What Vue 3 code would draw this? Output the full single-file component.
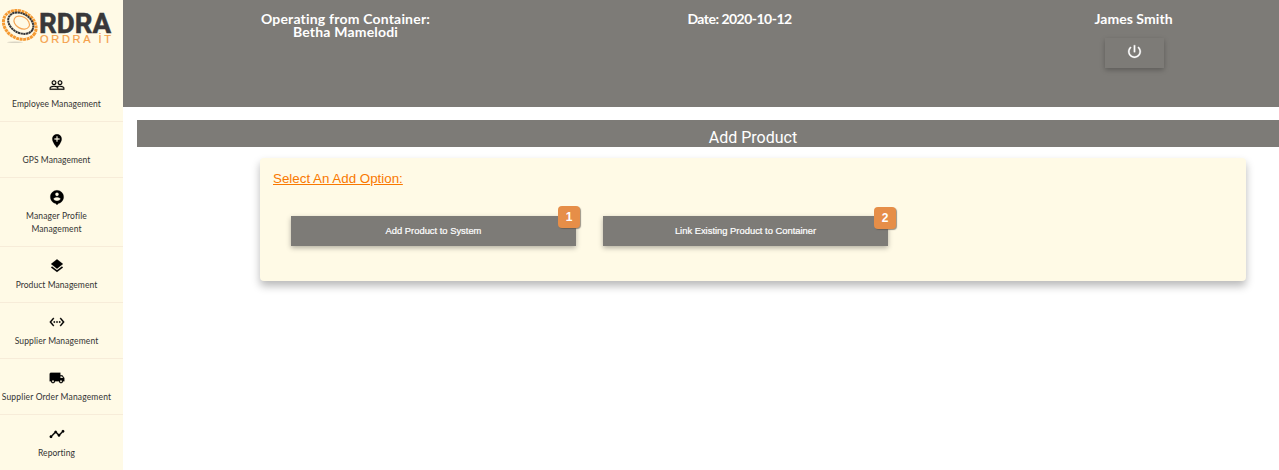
<script setup>
const items = [
  { label: ['Employee Management'], cls: 'wide', icon: 'M16.5 13c-1.2 0-3.07.34-4.5 1-1.43-.67-3.3-1-4.5-1C5.33 13 1 14.08 1 16.25V19h22v-2.75c0-2.17-4.33-3.25-6.5-3.25zm-4 4.5h-10v-1.25c0-.54 2.56-1.75 5-1.75s5 1.21 5 1.75v1.25zm9 0H14v-1.25c0-.46-.2-.86-.52-1.22.88-.3 1.96-.53 3.02-.53 2.44 0 5 1.21 5 1.75v1.25zM7.5 12c1.93 0 3.5-1.57 3.5-3.5S9.43 5 7.5 5 4 6.57 4 8.5 5.57 12 7.5 12zm0-5.5c1.1 0 2 .9 2 2s-.9 2-2 2-2-.9-2-2 .9-2 2-2zm9 5.5c1.93 0 3.5-1.57 3.5-3.5S18.43 5 16.5 5 13 6.57 13 8.5s1.57 3.5 3.5 3.5zm0-5.5c1.1 0 2 .9 2 2s-.9 2-2 2-2-.9-2-2 .9-2 2-2z' },
  { label: ['GPS Management'], cls: 'wide', icon: 'M12 2C8.14 2 5 5.14 5 9c0 5.25 7 13 7 13s7-7.75 7-13c0-3.86-3.14-7-7-7zm4 8h-3v3h-2v-3H8V8h3V5h2v3h3v2z' },
  { label: ['Manager Profile', 'Management'], cls: 'wider', icon: 'M12 2C6.48 2 2 6.48 2 12c0 4.84 3.44 8.87 8 9.8L12 24l2-2.2c4.56-.93 8-4.96 8-9.8 0-5.52-4.48-10-10-10zm0 3.3c1.49 0 2.7 1.21 2.7 2.7s-1.21 2.7-2.7 2.7S9.3 9.49 9.3 8s1.21-2.7 2.7-2.7zM12 18c-2.25 0-4.22-1.14-5.39-2.88.03-1.79 3.59-2.77 5.39-2.77 1.79 0 5.36.98 5.39 2.77C16.22 16.86 14.25 18 12 18z' },
  { label: ['Product Management'], cls: 'wide', icon: 'M11.99 18.54l-7.37-5.73L3 14.07l9 7 9-7-1.63-1.27-7.38 5.74zM12 16l7.36-5.73L21 9l-9-7-9 7 1.63 1.27L12 16z' },
  { label: ['Supplier Management'], cls: 'wider', icon: 'M7.77 6.76L6.23 5.48.82 12l5.41 6.52 1.54-1.28L3.42 12l4.35-5.24zM7 13h2v-2H7v2zm10-2h-2v2h2v-2zm-6 2h2v-2h-2v2zm6.77-7.52l-1.54 1.28L20.58 12l-4.35 5.24 1.54 1.28L23.18 12l-5.41-6.52z' },
  { label: ['Supplier Order Management'], cls: 'widest', icon: 'M20 8h-3V4H3c-1.1 0-2 .9-2 2v11h2c0 1.66 1.34 3 3 3s3-1.34 3-3h6c0 1.66 1.34 3 3 3s3-1.34 3-3h2v-5l-3-4zM6 18.5c-.83 0-1.5-.67-1.5-1.5s.67-1.5 1.5-1.5 1.5.67 1.5 1.5-.67 1.5-1.5 1.5zm13.5-9l1.96 2.5H17V9.5h2.5zm-1.5 9c-.83 0-1.5-.67-1.5-1.5s.67-1.5 1.5-1.5 1.5.67 1.5 1.5-.67 1.5-1.5 1.5z' },
  { label: ['Reporting'], cls: 'wide', icon: 'M23 8c0 1.1-.9 2-2 2-.18 0-.35-.02-.51-.07l-3.56 3.55c.05.16.07.34.07.52 0 1.1-.9 2-2 2s-2-.9-2-2c0-.18.02-.36.07-.52l-2.55-2.55c-.16.05-.34.07-.52.07s-.36-.02-.52-.07l-4.55 4.56c.05.16.07.33.07.51 0 1.1-.9 2-2 2s-2-.9-2-2 .9-2 2-2c.18 0 .35.02.51.07l4.56-4.55C8.02 9.36 8 9.18 8 9c0-1.1.9-2 2-2s2 .9 2 2c0 .18-.02.36-.07.52l2.55 2.55c.16-.05.34-.07.52-.07s.36.02.52.07l3.55-3.56C19.02 8.35 19 8.18 19 8c0-1.1.9-2 2-2s2 .9 2 2z' },
]
const options = [
  { text: 'Add Product to System', n: 1 },
  { text: 'Link Existing Product to Container', n: 2 },
]
</script>

<template>
  <div class="app">
    <aside class="side">
      <svg class="logo" width="123" height="66" viewBox="0 0 123 66">
        <ellipse cx="15" cy="42.300" rx="8" ry=".8" fill="#d9d4c4" />
        <g fill="none" transform="rotate(30 20 24.500)">
          <ellipse cx="20" cy="25" rx="17.200" ry="13.400" stroke="#f59a32" stroke-width="3" stroke-dasharray="2.900 .6" />
          <ellipse cx="20" cy="23" rx="13.400" ry="9.600" stroke="#38383a" stroke-width="2" stroke-dasharray="2.300 .4" />
          <ellipse cx="20.500" cy="22" rx="8.300" ry="5.800" stroke="#f5a656" stroke-width="1.200" />
        </g>
        <text class="logo-main" x="39" y="32.700" textLength="72" lengthAdjust="spacingAndGlyphs">RDRA</text>
        <text class="logo-sub" x="40" y="43" textLength="71">ORDRA İT</text>
      </svg>
      <nav>
        <a v-for="item in items" :key="item.label[0]" class="item" :class="item.cls">
          <svg width="16" height="16" viewBox="0 0 24 24"><path :d="item.icon" /></svg>
          <span v-for="line in item.label" :key="line">{{ line }}</span>
        </a>
      </nav>
    </aside>
    <div class="page">
      <header class="top">
        <div class="cell container-name">Operating from Container:<br />Betha Mamelodi</div>
        <div class="cell date">Date: 2020-10-12</div>
        <div class="cell user">
          <span>James Smith</span>
          <button class="power" aria-label="Log out">
            <svg width="17" height="17" viewBox="0 0 24 24"><path d="M13 3h-2v10h2V3zm4.830 2.170l-1.420 1.420C17.990 7.860 19 9.810 19 12c0 3.870-3.130 7-7 7s-7-3.130-7-7c0-2.190 1.010-4.140 2.580-5.420L6.170 5.170C4.230 6.820 3 9.260 3 12c0 4.970 4.030 9 9 9s9-4.030 9-9c0-2.740-1.230-5.180-3.170-6.830z" /></svg>
          </button>
        </div>
      </header>
      <h1 class="title">Add Product</h1>
      <section class="card">
        <h2>Select An Add Option:</h2>
        <div class="options">
          <button v-for="o in options" :key="o.n" class="option">
            {{ o.text }}<span class="badge" :class="'badge-' + o.n">{{ o.n }}</span>
          </button>
        </div>
      </section>
    </div>
  </div>
</template>

<style>
body { margin: 0; background: #fff; overflow: hidden; }
</style>

<style scoped>
.app { display: flex; height: 470px; overflow: hidden; }
.side { width: 123px; flex: none; background: #fffae6; }
.logo { display: block; }
.logo-main { font: bold 27px Roboto, sans-serif; fill: #38383a; stroke: #38383a; stroke-width: .5px; }
.logo-sub { font: 11px "Liberation Sans", sans-serif; fill: #f5a04a; stroke: #f5a04a; stroke-width: .2px; }
.item {
  display: flex; flex-direction: column; align-items: center; box-sizing: border-box;
  width: 123px; padding: 11px 10px 10px 0; border-bottom: 1px solid #f7ecd9;
  font: 8.500px/13px Lato, sans-serif; color: #333; white-space: nowrap;
}
.wide { letter-spacing: .06px; }
.wider { letter-spacing: .12px; }
.widest { letter-spacing: .16px; }
.item svg { margin-bottom: 5px; fill: #000; stroke: #000; stroke-width: .3px; }
.page { flex: 1; min-width: 0; }
.top {
  display: flex; height: 107px; box-sizing: border-box; padding: 12px 0 0 28px; background: #7d7b77;
  color: #fff; font: bold 14px/13px Lato, sans-serif; text-align: center;
}
.cell { flex: none; }
.container-name { width: 389px; letter-spacing: .19px; }
.date { width: 399px; letter-spacing: -.52px; }
.user { width: 389px; display: flex; flex-direction: column; align-items: center; letter-spacing: .06px; }
.power {
  display: flex; align-items: center; justify-content: center; width: 59px; height: 30px; margin: 13px 0 0 1px;
  padding: 0; border: 0; background: #7d7b77; box-shadow: 0 2px 5px rgba(0, 0, 0, .26);
}
.power svg { fill: #fff; margin: -4px 0 0 0; stroke: #fff; stroke-width: .4px; }
.title {
  margin: 13px 0 0 14px; height: 27px; background: #7d7b77; color: #fff; text-align: center;
  font: 400 16px/35px Roboto, sans-serif; padding-left: 90px;
}
.card {
  box-sizing: border-box; width: 986px; height: 123px; margin: 11px 0 0 137px; padding: 13px 13px 0;
  border-radius: 4px; background: #fffae6; box-shadow: 0 5px 8px rgba(0, 0, 0, .28);
}
.card h2 { margin: 0; color: #f97800; font: 400 13.350px/15px "Liberation Sans", Arial, sans-serif; text-decoration: underline; }
.options { display: flex; gap: 27px; margin: 30px 0 0 18px; }
.option {
  position: relative; width: 285px; height: 30px; padding: 0; border: 0; background: #7d7b77; color: #fff;
  font: 9.380px/30px "Liberation Sans", Arial, sans-serif; -webkit-text-stroke: .2px #fff;
  box-shadow: 0 2px 5px rgba(0, 0, 0, .3);
}
.badge {
  position: absolute; top: -10px; right: -4px; width: 22px; height: 22px; border-radius: 4px;
  background: #e68e48; color: #fff; box-shadow: 1px 1px 1px rgba(90, 80, 70, .6);
  font: bold 12px/22px "Liberation Sans", Arial, sans-serif; -webkit-text-stroke: 0;
}
.badge-2 { top: -9px; right: -8px; }
</style>
